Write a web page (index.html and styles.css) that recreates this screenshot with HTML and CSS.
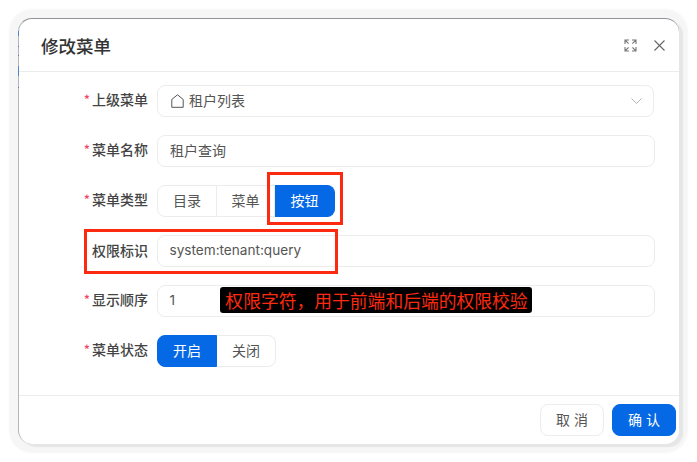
FILE: index.html
```html
<!DOCTYPE html>
<html lang="zh-CN">
<head>
<meta charset="utf-8">
<title>修改菜单</title>
<link rel="stylesheet" href="styles.css">
</head>
<body>
<div class="modal">
  <header class="head">
    <h1 class="title">修改菜单</h1>
    <div class="head-tools">
      <svg class="icon-full" viewBox="0 0 13 13" width="13" height="13" fill="none" stroke="#777" stroke-width="1.1">
        <path d="M1 5V1h4M1 1l3.6 3.6M8 1h4v4M12 1L8.400 4.600M1 8v4h4M1 12l3.600-3.600M12 8v4H8M12 12L8.400 8.400"/>
      </svg>
      <svg class="icon-close" viewBox="0 0 11 11" width="11" height="11" fill="none" stroke="#666" stroke-width="1.100">
        <path d="M.5.5l10 10M10.500.5l-10 10"/>
      </svg>
    </div>
  </header>
  <main class="form">
    <div class="row">
      <label class="label"><i class="star">*</i>上级菜单</label>
      <div class="field field-select">
        <svg class="icon-home" viewBox="0 0 13 14" width="13" height="14" fill="none" stroke="#555" stroke-width="1">
          <path d="M.8 13.300V5.400L6.500.8l5.700 4.600v7.900z"/>
        </svg>
        <span class="select-text">租户列表</span>
        <svg class="icon-chevron" viewBox="0 0 11 6" width="11" height="6" fill="none" stroke="#b4b4b4" stroke-width="1">
          <path d="M.5.500l5 5 5-5"/>
        </svg>
      </div>
    </div>
    <div class="row">
      <label class="label"><i class="star">*</i>菜单名称</label>
      <div class="field">租户查询</div>
    </div>
    <div class="row">
      <label class="label"><i class="star">*</i>菜单类型</label>
      <div class="segments">
        <span class="seg">目录</span>
        <span class="seg">菜单</span>
        <span class="seg seg-on">按钮</span>
      </div>
    </div>
    <div class="row">
      <label class="label">权限标识</label>
      <div class="field field-latin">system:tenant:query</div>
    </div>
    <div class="row">
      <label class="label"><i class="star">*</i>显示顺序</label>
      <div class="field field-latin">1</div>
    </div>
    <div class="row">
      <label class="label"><i class="star">*</i>菜单状态</label>
      <div class="segments">
        <span class="seg seg-on">开启</span>
        <span class="seg">关闭</span>
      </div>
    </div>
  </main>
  <footer class="foot">
    <button class="btn">取 消</button>
    <button class="btn btn-primary">确 认</button>
  </footer>
  <div class="mark mark-type"></div>
  <div class="mark mark-perm"></div>
  <div class="note">权限字符，用于前端和后端的权限校验</div>
</div>
</body>
</html>
```
FILE: styles.css
```css
* { box-sizing: border-box; }
html, body { margin: 0; height: 100%; background: #fff; }
body {
  padding: 18px;
  font-family: "Noto Sans CJK SC", "Noto Sans", sans-serif;
  color: #444;
  overflow: hidden;
}
.modal {
  position: relative;
  width: 661px;
  height: 426px;
  background: #fff;
  border-top: 1px solid #8f9296;
  border-left: 1px solid #b4b6b8;
  border-radius: 14px;
  box-shadow: 4px 3px 1px 0 #e6e6e6, 0 0 2px 9px #f6f6f6;
  display: flex;
  flex-direction: column;
}
.modal::before {
  content: "";
  position: absolute;
  left: -1px;
  top: 12px;
  width: 1px;
  height: 57px;
  background: linear-gradient(
    to bottom,
    #4f86cc 0 5px, transparent 5px 15px,
    #5a80b0 15px 16px, transparent 16px 24px,
    #5a80b0 24px 25px, transparent 25px 35px,
    #4f86cc 35px 45px, transparent 45px 56px,
    #5a80b0 56px 57px
  );
}
.head {
  height: 53px;
  padding: 0 14px 0 22px;
  border-bottom: 1px solid #ececec;
  display: flex;
  align-items: center;
  justify-content: space-between;
}
.title {
  margin: 1px 0 0;
  font-size: 17.500px;
  font-weight: 500;
  color: #333;
}
.head-tools { display: flex; align-items: center; gap: 17px; }
.head-tools svg { display: block; }
.form {
  flex: 1;
  padding: 13px 24px 0 0;
  display: flex;
  flex-direction: column;
  gap: 18px;
}
.row { display: flex; align-items: center; height: 32px; }
.label {
  width: 129px;
  margin-right: 9px;
  text-align: right;
  font-size: 14px;
  font-weight: 500;
  line-height: 20px;
  color: #444;
  white-space: nowrap;
  margin-bottom: 3px;
}
.star { font-style: normal; color: #f2476a; margin-right: 2px; font-size: 13px; }
.field {
  flex: 1;
  height: 32px;
  padding: 0 12px;
  border: 1px solid #ececec;
  border-radius: 8px;
  font-size: 14px;
  line-height: 28px;
  color: #555;
}
.field-latin { font-family: Inter, "Noto Sans", sans-serif; font-size: 13.600px; padding-left: 11.500px; }
.field-select { display: flex; align-items: center; gap: 5px; padding-left: 13px; padding-right: 11px; margin-right: 1px; }
.select-text { margin-top: -2px; }
.icon-chevron { margin-left: auto; }
.segments { display: flex; }
.seg {
  width: 59px;
  height: 32px;
  border: 1px solid #ececec;
  border-left: 0;
  font-size: 14px;
  line-height: 28px;
  text-align: center;
  color: #555;
}
.seg:first-child { border-left: 1px solid #ececec; border-radius: 8px 0 0 8px; width: 60px; }
.seg:last-child { border-radius: 0 8px 8px 0; }
.seg:nth-child(2):not(:last-child) { width: 58px; }
.seg-on { width: 60px; background: #0569e6; border-color: #0569e6; color: #fff; }
.seg:first-child.seg-on { border-color: #0569e6; }
.foot {
  height: 49px;
  border-top: 1px solid #ececec;
  padding: 8px 3px 0 0;
  display: flex;
  justify-content: flex-end;
  gap: 8px;
}
.btn {
  width: 64px;
  height: 32px;
  padding: 0 0 2px;
  border: 1px solid #ececec;
  border-radius: 8px;
  background: #fff;
  font: inherit;
  font-size: 14px;
  word-spacing: 1px;
  color: #555;
}
.btn-primary { background: #0569e6; border-color: #0569e6; color: #fff; }
.mark { position: absolute; border: 3px solid #fb2a10; }
.mark-type { left: 248px; top: 153px; width: 76px; height: 53px; }
.mark-perm { left: 65px; top: 210px; width: 254px; height: 45px; }
.note {
  position: absolute;
  left: 201px;
  top: 268px;
  width: 312px;
  height: 26px;
  padding-left: 1px;
  background: #000;
  border-radius: 3px;
  color: #fb2a10;
  font-size: 17.800px;
  line-height: 26px;
  text-align: center;
  white-space: nowrap;
}
```
